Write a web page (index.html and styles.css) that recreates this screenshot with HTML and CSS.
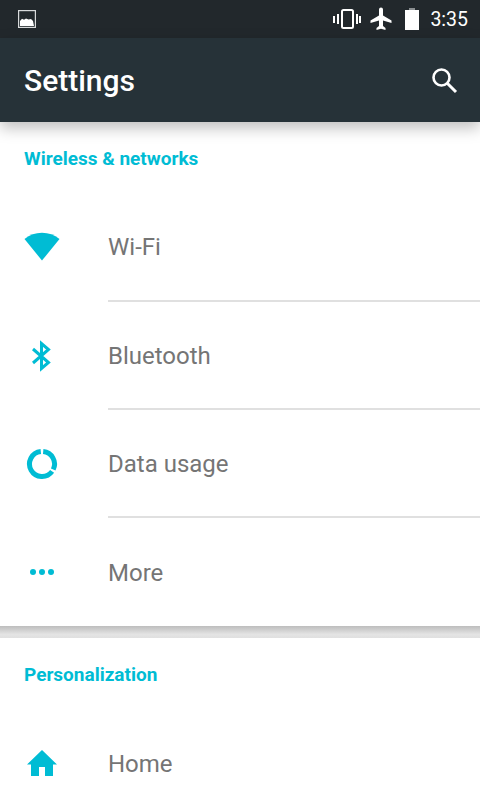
FILE: index.html
```html
<!DOCTYPE html>
<html lang="en">
<head>
  <meta charset="UTF-8">
  <title>Settings</title>
  <meta name="viewport" content="width=device-width, initial-scale=1.0">
  <link rel="stylesheet" href="styles.css">
</head>
<body>
  <div class="phone">
    <div class="status-bar">
      <svg class="status-pic" width="20" height="20" viewBox="0 0 20 20">
        <rect x="1.6" y="1.6" width="16.8" height="16.800" fill="#22282c" stroke="#d8dadb" stroke-width="1.2"/>
        <path d="M3 17V12L5 9.800L7 10.800L9 9.400L11.500 10.600L14 10L16 12L17 17Z" fill="#fff"/>
      </svg>
      <div class="status-right">
        <svg width="28" height="24" viewBox="0 0 28 24">
          <rect x="9" y="3" width="11" height="18" rx="1.500" fill="none" stroke="#fff" stroke-width="2"/>
          <path d="M4 7h2v10H4zM23 7h2v10h-2zM0 9h2v7H0zM26 9h2v7h-2z" fill="#fff"/>
        </svg>
        <svg width="24" height="24" viewBox="0 0 24 24">
          <path d="M22.500 16v-2.500L14 8.500V2.500a2 2 0 0 0-4 0v6L1.500 13.500V16l8.500-2.500V19l-2.500 2v2l4.500-1.200L16.500 23v-2L14 19v-5.500z" fill="#fff"/>
        </svg>
        <svg class="status-battery" width="14" height="22" viewBox="0 0 14 22">
          <path d="M4 0h6v2H4z" fill="#8b8f91"/>
          <path d="M0 2h14v20H0z" fill="#fff"/>
        </svg>
        <span class="clock">3:35</span>
      </div>
    </div>

    <header class="toolbar">
      <h1>Settings</h1>
      <svg width="28" height="28" viewBox="0 0 28 28">
        <circle cx="11.500" cy="11.500" r="8" fill="none" stroke="#fff" stroke-width="2.600"/>
        <path d="M17.500 17.500L26 26" stroke="#fff" stroke-width="3" fill="none"/>
      </svg>
    </header>

    <section class="group">
      <h2>Wireless &amp; networks</h2>
      <div class="row row-first">
        <svg class="row-icon" width="36" height="30" viewBox="0 0 36 30">
          <path d="M18 28.500L0.500 7A27.500 27.500 0 0 1 35.500 7Z" fill="#00bcd4"/>
        </svg>
        <div class="row-label">Wi-Fi</div>
      </div>
      <div class="row">
        <svg class="row-icon" width="36" height="32" viewBox="0 0 36 32">
          <path d="M9 9L24.500 22.500L17.500 28.500V3.500L24.500 9.500L9 23" fill="none" stroke="#00bcd4" stroke-width="3"/>
        </svg>
        <div class="row-label">Bluetooth</div>
      </div>
      <div class="row">
        <svg class="row-icon" width="36" height="32" viewBox="0 0 36 32">
          <path d="M19.200 3.560A12.500 12.500 0 0 1 29.230 21.480" fill="none" stroke="#00bcd4" stroke-width="5"/>
          <path d="M28.110 23.350A12.500 12.500 0 1 1 16.800 3.560" fill="none" stroke="#00bcd4" stroke-width="5"/>
        </svg>
        <div class="row-label">Data usage</div>
      </div>
      <div class="row row-last">
        <svg class="row-icon" width="36" height="10" viewBox="0 0 36 10">
          <circle cx="9" cy="5" r="3" fill="#00bcd4"/>
          <circle cx="18" cy="5" r="3" fill="#00bcd4"/>
          <circle cx="27" cy="5" r="3" fill="#00bcd4"/>
        </svg>
        <div class="row-label">More</div>
      </div>
    </section>

    <div class="group-gap"></div>

    <section class="group">
      <h2>Personalization</h2>
      <div class="row row-last">
        <svg class="row-icon" width="36" height="28" viewBox="0 0 36 28">
          <path d="M18 0L33 14.500H29V26H21V17H15V26H7V14.500H3Z" fill="#00bcd4"/>
        </svg>
        <div class="row-label row-label-home">Home</div>
      </div>
    </section>
  </div>
</body>
</html>
```

FILE: styles.css
```css
html, body {
  margin: 0;
  padding: 0;
}

.phone {
  width: 480px;
  height: 800px;
  overflow: hidden;
  background: #fff;
  font-family: Roboto, sans-serif;
}

.status-bar {
  height: 38px;
  background: #22282c;
  display: flex;
  align-items: center;
  justify-content: space-between;
  padding: 0 12px 0 17px;
}

.status-pic {
  display: block;
}

.status-right {
  display: flex;
  align-items: center;
  gap: 8px;
}

.status-right svg {
  display: block;
}

.status-battery {
  margin-left: 4px;
}

.clock {
  color: #fff;
  font-size: 19.500px;
  margin-left: 3px;
}

.toolbar {
  position: relative;
  height: 84px;
  background: #263238;
  display: flex;
  align-items: center;
  justify-content: space-between;
  padding: 0 22px 0 24px;
  box-shadow: 0 6px 14px rgba(0, 0, 0, 0.25);
}

.toolbar h1 {
  margin: 0;
  color: #fff;
  font-size: 30px;
  font-weight: 500;
}

.group h2 {
  margin: 0;
  height: 72px;
  padding: 26px 24px 0;
  box-sizing: border-box;
  color: #00bcd4;
  font-size: 19px;
  font-weight: 700;
  line-height: 22px;
}

.row {
  height: 108px;
  display: flex;
  align-items: center;
  padding-left: 24px;
}

.row-icon {
  display: block;
  width: 36px;
  flex: none;
  margin-right: 48px;
}

.row-label {
  flex: 1;
  height: 108px;
  line-height: 108px;
  box-sizing: border-box;
  color: #757575;
  font-size: 24px;
  border-bottom: 2px solid #e0e0e0;
}

.row-first .row-label {
  line-height: 106px;
}

.row-first .row-icon {
  margin-top: -2px;
}

.row-last .row-label {
  line-height: 110px;
  border-bottom: none;
}

.row-last .row-label-home {
  line-height: 108px;
}

.group-gap {
  height: 12px;
  background: linear-gradient(#bdbdbd, #e4e4e4 70%, #e0e0e0);
}
```
